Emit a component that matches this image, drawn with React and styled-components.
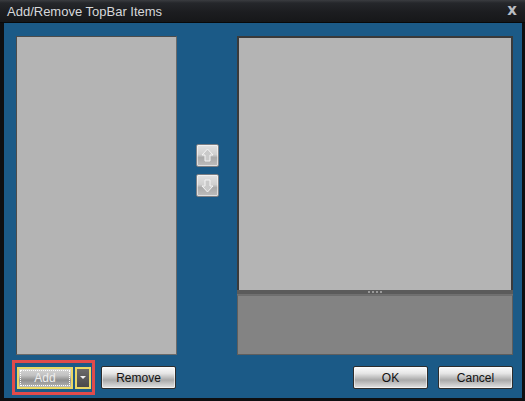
import React from 'react';
import styled, { createGlobalStyle, css } from 'styled-components';

const GlobalStyle = createGlobalStyle`
  html, body {
    margin: 0;
    padding: 0;
    background: #101010;
  }
  body {
    font-family: "Liberation Sans", Arial, sans-serif;
  }
`;

const Window = styled.div`
  box-sizing: border-box;
  display: flex;
  flex-direction: column;
  width: 525px;
  height: 401px;
  background: #0e0f11;
`;

const TitleBar = styled.div`
  align-items: center;
  background: linear-gradient(to bottom, #3a3c40 0px, #25272b 3px, #1c1d20 12px, #161719 100%);
  border-bottom: 1px solid #08090a;
  box-sizing: border-box;
  color: #d6d8da;
  display: flex;
  flex: 0 0 auto;
  font-size: 13px;
  height: 23px;
  justify-content: space-between;
  padding: 1px 8px 0 7px;
`;

const CloseMark = styled.span`
  color: #b8bcc2;
  font-family: "DejaVu Sans", sans-serif;
  font-size: 15px;
  font-weight: 700;
  line-height: 1;
  margin-top: -2px;
`;

const Body = styled.div`
  background: #1b5a87;
  box-sizing: border-box;
  display: flex;
  flex: 1 1 auto;
  flex-direction: column;
  margin: 0 3px 3px 4px;
  padding: 13px 9px 3px 12px;
`;

const Panels = styled.div`
  display: flex;
  height: 319px;
`;

const ListBox = styled.div`
  background: #b4b4b4;
  border: 1px solid #4c4c4c;
  border-right-color: #6a6a6a;
  border-bottom-color: #6a6a6a;
  box-sizing: border-box;
  width: 161px;
`;

const Middle = styled.div`
  display: flex;
  flex-direction: column;
  gap: 7px;
  padding: 108px 0 0 19px;
  width: 60px;
  box-sizing: border-box;
`;

const metal = css`
  background: linear-gradient(to bottom, #fbfbfb 0%, #e6e6e6 30%, #a9a9a9 62%, #c8c8c8 82%, #e4e4e4 100%);
  border: 1px solid #2d2d2d;
  border-radius: 2px;
  box-shadow: inset 0 0 0 1px rgba(255,255,255,.55);
  box-sizing: border-box;
`;

const ArrowButton = styled.div`
  ${metal}
  align-items: center;
  background: linear-gradient(to bottom, #e2e2e2 0%, #cfcfcf 45%, #aaaaaa 60%, #bdbdbd 100%);
  border: 1px solid #7c7f84;
  display: flex;
  height: 23px;
  justify-content: center;
  width: 23px;
`;

const RightColumn = styled.div`
  display: flex;
  flex: 1 1 auto;
  flex-direction: column;
`;

const TopPane = styled.div`
  background: #b4b4b4;
  border: 2px solid #3a3a3a;
  border-bottom: none;
  box-sizing: border-box;
  flex: 1 1 auto;
`;

const Splitter = styled.div`
  align-items: center;
  background: #5b5b5b;
  border-bottom: 1px solid #707070;
  display: flex;
  gap: 2px;
  height: 4px;
  justify-content: center;
`;

const Dot = styled.span`
  background: #9a9a9a;
  display: block;
  height: 2px;
  width: 2px;
`;

const BottomPane = styled.div`
  background: #838383;
  border: 1px solid #5e5e5e;
  border-top-color: #6e6e6e;
  box-sizing: border-box;
  height: 60px;
`;

const ButtonRow = styled.div`
  align-items: center;
  display: flex;
  height: 35px;
  margin-top: 5px;
`;

const AddGroup = styled.div`
  align-items: center;
  border: 3px solid #e14b4b;
  box-sizing: border-box;
  display: flex;
  gap: 2px;
  height: 35px;
  margin-left: -4px;
  padding: 0 1px 0 2px;
  width: 83px;
`;

const AddButton = styled.div`
  align-items: center;
  background: linear-gradient(to bottom, #d4d4d4 0%, #c2c2c2 35%, #8e8e8e 62%, #a6a6a6 85%, #bcbcbc 100%);
  border: 2px solid #e9d765;
  box-sizing: border-box;
  color: #eeeeee;
  display: flex;
  font-size: 12px;
  height: 22px;
  justify-content: center;
  position: relative;
  width: 56px;

  &::after {
    border: 1px dotted #ffffff;
    content: '';
    inset: 1px;
    position: absolute;
  }
`;

const DropButton = styled.div`
  align-items: center;
  background: linear-gradient(to bottom, #6a6a6a 0%, #4a4a4a 100%);
  border: 2px solid #e9d765;
  box-sizing: border-box;
  display: flex;
  height: 22px;
  justify-content: center;
  width: 16px;
`;

const Caret = styled.span`
  border-left: 3px solid transparent;
  border-right: 3px solid transparent;
  border-top: 3px solid #f2f2f2;
  display: block;
  height: 0;
  width: 0;
`;

const Button = styled.div`
  ${metal}
  align-items: center;
  color: #111;
  display: flex;
  font-size: 12px;
  height: 23px;
  justify-content: center;
  margin-left: ${props => props.gap || 0}px;
  width: ${props => props.width || 75}px;
`;

const Spacer = styled.div`
  flex: 1 1 auto;
`;

const UpIcon = () => (
  <svg width="13" height="15" viewBox="0 0 13 15">
    <path d="M6.5 1 L12 7 L9 7 L9 13 L4 13 L4 7 L1 7 Z" fill="#c9c9c9" stroke="#f4f4f4" strokeWidth="1" />
  </svg>
);

const DownIcon = () => (
  <svg width="13" height="15" viewBox="0 0 13 15">
    <path d="M4 2 L9 2 L9 8 L12 8 L6.5 14 L1 8 L4 8 Z" fill="#c9c9c9" stroke="#f4f4f4" strokeWidth="1" />
  </svg>
);

const App = () => (
  <>
    <GlobalStyle />
    <Window>
      <TitleBar>
        <span>Add/Remove TopBar Items</span>
        <CloseMark>x</CloseMark>
      </TitleBar>
      <Body>
        <Panels>
          <ListBox />
          <Middle>
            <ArrowButton><UpIcon /></ArrowButton>
            <ArrowButton><DownIcon /></ArrowButton>
          </Middle>
          <RightColumn>
            <TopPane />
            <Splitter>
              <Dot /><Dot /><Dot /><Dot />
            </Splitter>
            <BottomPane />
          </RightColumn>
        </Panels>
        <ButtonRow>
          <AddGroup>
            <AddButton>Add</AddButton>
            <DropButton><Caret /></DropButton>
          </AddGroup>
          <Button gap={6} width={75}>Remove</Button>
          <Spacer />
          <Button width={75}>OK</Button>
          <Button gap={10} width={75}>Cancel</Button>
        </ButtonRow>
      </Body>
    </Window>
  </>
);

export default App;
